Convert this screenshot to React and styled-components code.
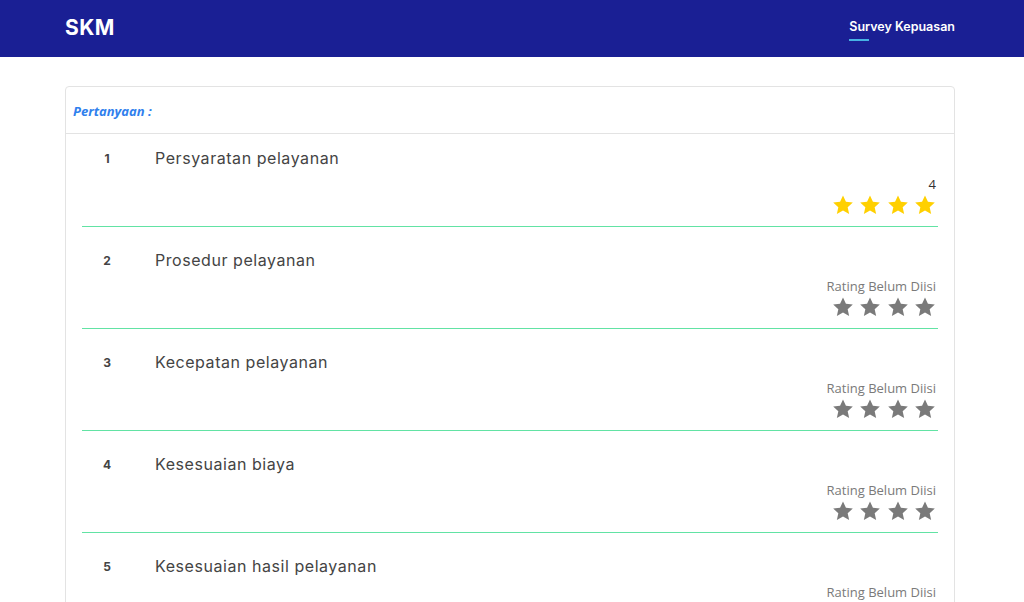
import React from "react";
import styled, { createGlobalStyle } from "styled-components";

const questions = [
  { id: 1, text: "Persyaratan pelayanan", rating: 4 },
  { id: 2, text: "Prosedur pelayanan", rating: 0 },
  { id: 3, text: "Kecepatan pelayanan", rating: 0 },
  { id: 4, text: "Kesesuaian biaya", rating: 0 },
  { id: 5, text: "Kesesuaian hasil pelayanan", rating: 0 },
];

const GlobalStyle = createGlobalStyle`
  html, body {
    margin: 0;
    padding: 0;
    background: #ffffff;
    font-family: "Open Sans", "Liberation Sans", sans-serif;
  }
`;

const Header = styled.header`
  height: 57px;
  background: #1a1f94;
`;

const HeaderInner = styled.div`
  width: 890px;
  margin-left: 65px;
  height: 100%;
  display: flex;
  align-items: center;
  justify-content: space-between;
`;

const Logo = styled.div`
  font-family: Inter, "Liberation Sans", sans-serif;
  font-weight: 700;
  font-size: 21px;
  letter-spacing: 0.5px;
  color: #ffffff;
  margin-top: -3px;
`;

const NavLink = styled.a`
  position: relative;
  font-family: Inter, "Liberation Sans", sans-serif;
  font-weight: 600;
  font-size: 12.5px;
  color: #ffffff;
  text-decoration: none;
  margin-top: -4px;
  &::after {
    content: "";
    position: absolute;
    left: 0;
    bottom: -7px;
    width: 20px;
    height: 2px;
    background: #47b2e4;
  }
`;

const Main = styled.main`
  width: 890px;
  margin-left: 65px;
  padding-top: 29px;
`;

const Card = styled.section`
  border: 1px solid #e3e3e3;
  border-radius: 4px;
  background: #ffffff;
`;

const CardHeader = styled.div`
  height: 47px;
  padding: 1px 7px 0;
  box-sizing: border-box;
  display: flex;
  align-items: center;
  border-bottom: 1px solid #e3e3e3;
  font-family: "Open Sans", "Liberation Sans", sans-serif;
  font-style: italic;
  font-weight: 700;
  font-size: 13px;
  color: #2f80ed;
`;

const CardBody = styled.div`
  padding: 0 16px;
`;

const Row = styled.div`
  padding: 12px 2px 10px 0;
  margin-bottom: 9px;
  border-bottom: 1px solid #62e3a4;
`;

const QuestionLine = styled.div`
  display: flex;
  align-items: center;
  height: 24px;
`;

const Number = styled.span`
  width: 50px;
  text-align: center;
  font-family: Inter, "Liberation Sans", sans-serif;
  font-weight: 700;
  font-size: 12px;
  color: #444444;
`;

const Question = styled.span`
  margin-left: 23px;
  font-family: Inter, "Liberation Sans", sans-serif;
  font-size: 16px;
  letter-spacing: 0.55px;
  color: #444444;
`;

const RatingBlock = styled.div`
  margin-top: 4px;
  display: flex;
  flex-direction: column;
  align-items: flex-end;
`;

const RatingLabel = styled.span`
  font-family: "Open Sans", "Liberation Sans", sans-serif;
  font-size: 13px;
  line-height: 20px;
  height: 20px;
  color: ${({ $filled }) => ($filled ? "#333333" : "#7a7a7a")};
`;

const Stars = styled.div`
  display: flex;
  gap: 5.4px;
  height: 22px;
  align-items: center;
`;

const StarIcon = styled.svg`
  width: 22px;
  height: 22px;
  display: block;
  fill: ${({ $on }) => ($on ? "#ffd000" : "#7a7a7a")};
`;

const Star = ({ on }) => (
  <StarIcon $on={on} viewBox="0 0 24 24">
    <path d="M12 1.6l3.2 6.9 7.5.8-5.6 5.1 1.6 7.4L12 18l-6.7 3.8 1.6-7.4-5.6-5.1 7.5-.8z" />
  </StarIcon>
);

const App = () => (
  <>
    <GlobalStyle />
    <Header>
      <HeaderInner>
        <Logo>SKM</Logo>
        <NavLink href="#">Survey Kepuasan</NavLink>
      </HeaderInner>
    </Header>
    <Main>
      <Card>
        <CardHeader>Pertanyaan :</CardHeader>
        <CardBody>
          {questions.map((q) => (
            <Row key={q.id}>
              <QuestionLine>
                <Number>{q.id}</Number>
                <Question>{q.text}</Question>
              </QuestionLine>
              <RatingBlock>
                <RatingLabel $filled={q.rating > 0}>
                  {q.rating > 0 ? q.rating : "Rating Belum Diisi"}
                </RatingLabel>
                <Stars>
                  {[1, 2, 3, 4].map((n) => (
                    <Star key={n} on={n <= q.rating} />
                  ))}
                </Stars>
              </RatingBlock>
            </Row>
          ))}
        </CardBody>
      </Card>
    </Main>
  </>
);

export default App;
